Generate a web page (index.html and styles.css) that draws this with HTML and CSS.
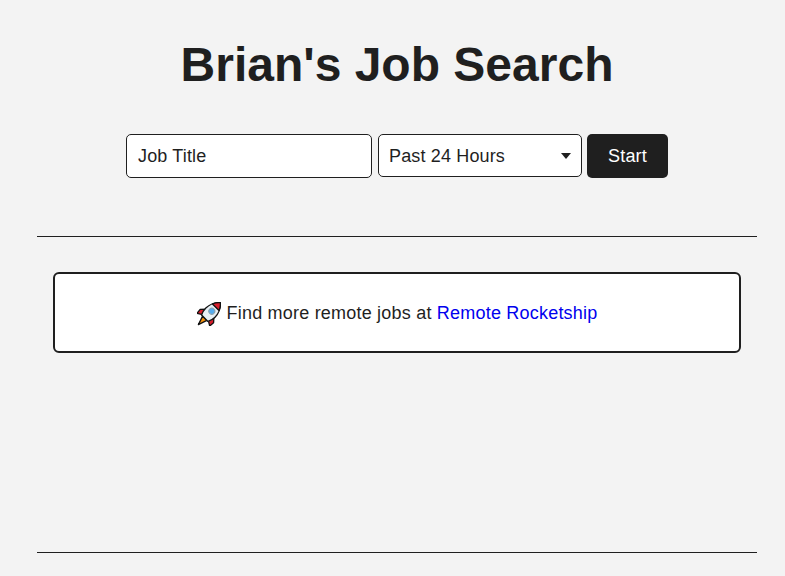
FILE: index.html
```html
<!DOCTYPE html>
<html lang="en">

<head>
    <meta charset="UTF-8">
    <meta name="viewport" content="width=device-width, initial-scale=1.0">
    <title>Brian's Job Search</title>
    <link rel="stylesheet" href="styles.css">
</head>

<body>

    <div class="container">
        <h1>Brian's Job Search</h1>

        <form class="search-form">
            <input type="text" class="job-input" placeholder="Job Title">
            <select class="time-select">
                <option>Past 24 Hours</option>
                <option>Past Week</option>
                <option>Past Month</option>
            </select>
            <button type="button" class="start-button">Start</button>
        </form>

        <hr class="divider">

        <div class="results">
            <div class="promo">
                <svg class="rocket" viewBox="0 0 24 24" width="24" height="24" aria-hidden="true">
                    <g transform="rotate(45 12 12) translate(0 -3)" stroke="#111" stroke-width="1.3" stroke-linejoin="round">
                        <path d="M9 21 L12 30 L15 21 Z" fill="#f4900c"/>
                        <path d="M7 13 L2.5 18 L3 23 L8 20 Z" fill="#d81e2c"/>
                        <path d="M17 13 L21.5 18 L21 23 L16 20 Z" fill="#d81e2c"/>
                        <path d="M12 -1 C16 2 18.5 8 18.5 13 C18.5 17 17.5 19 16.5 21 H7.5 C6.5 19 5.5 17 5.5 13 C5.5 8 8 2 12 -1 Z" fill="#e8f0f5"/>
                        <path d="M12 -1 C14 0.5 15.6 2.8 16.6 5.5 H7.4 C8.4 2.8 10 0.5 12 -1 Z" fill="#d81e2c"/>
                        <circle cx="12" cy="11" r="3" fill="#55acee" stroke="#8aa0ad" stroke-width="1"/>
                    </g>
                </svg>
                <span>Find more remote jobs at <a href="#">Remote Rocketship</a></span>
            </div>
        </div>

        <hr class="divider">
    </div>

</body>

</html>
```

FILE: styles.css
```css
body {
    font-family: "Liberation Sans", Arial, sans-serif;
    background-color: #f3f3f3;
    color: #1f1f1f;
    margin: 0;
    padding: 0;
}

.container {
    width: 720px;
    margin-left: 37px;
}

h1 {
    font-size: 48px;
    line-height: 55px;
    font-weight: bold;
    text-align: center;
    margin: 0;
    padding-top: 37px;
}

.search-form {
    display: flex;
    justify-content: center;
    align-items: flex-start;
    margin-top: 42px;
}

.job-input,
.time-select {
    font-family: inherit;
    font-size: 18px;
    letter-spacing: 0.15px;
    color: #1f1f1f;
    background-color: #fff;
    border: 1px solid #1f1f1f;
    border-radius: 5px;
    box-sizing: border-box;
}

.job-input {
    width: 246px;
    height: 44px;
    padding: 0 11px;
}

.job-input::placeholder {
    color: #1f1f1f;
    opacity: 1;
}

.time-select {
    width: 204px;
    height: 43px;
    margin-left: 6px;
    padding: 0 10px;
    appearance: none;
    background-image: url("data:image/svg+xml,%3Csvg xmlns='http://www.w3.org/2000/svg' width='10' height='6'%3E%3Cpath d='M0 0h10L5 6z' fill='%231f1f1f'/%3E%3C/svg%3E");
    background-repeat: no-repeat;
    background-position: right 10px center;
}

.start-button {
    width: 81px;
    height: 44px;
    margin-left: 5px;
    font-family: inherit;
    font-size: 18px;
    letter-spacing: 0.15px;
    color: #fff;
    background-color: #1f1f1f;
    border: none;
    border-radius: 5px;
}

.divider {
    height: 1px;
    border: none;
    background-color: #1f1f1f;
    margin: 0;
}

.search-form + .divider {
    margin-top: 58px;
}

.results {
    height: 315px;
    padding: 35px 16px 0;
    box-sizing: border-box;
}

.promo {
    display: flex;
    justify-content: center;
    align-items: center;
    gap: 6px;
    height: 81px;
    padding-top: 2px;
    box-sizing: border-box;
    background-color: #fff;
    border: 2px solid #1f1f1f;
    border-radius: 6px;
    font-size: 18px;
    letter-spacing: 0.21px;
}

.promo a {
    color: #0000ee;
    text-decoration: none;
}
```
